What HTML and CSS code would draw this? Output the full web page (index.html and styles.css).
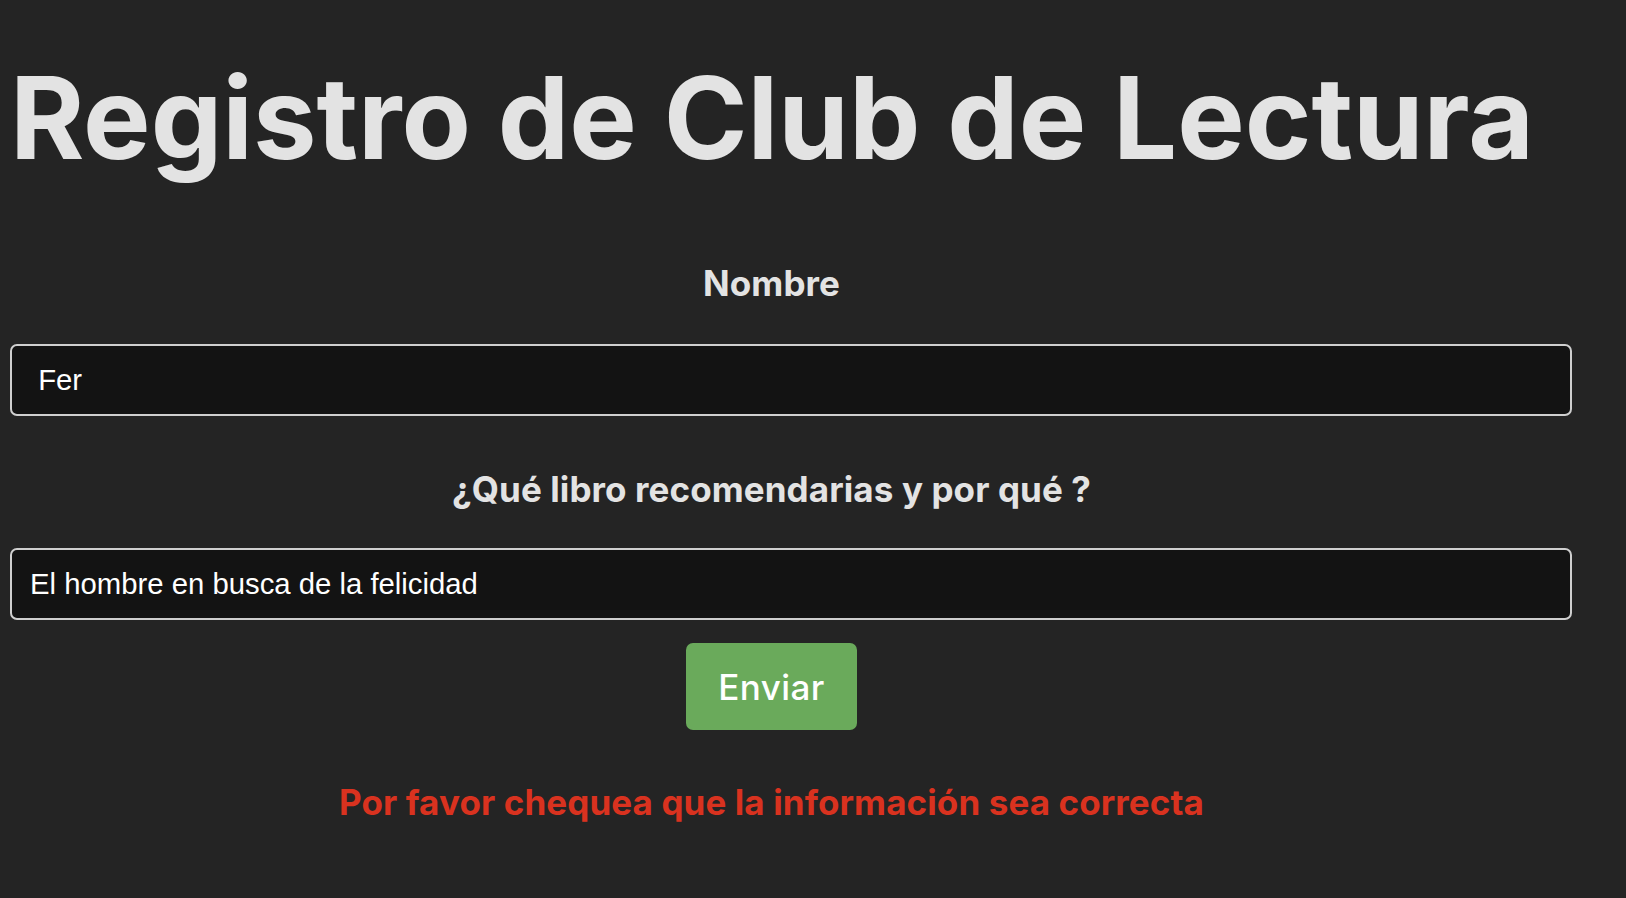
FILE: index.html
```html
<!DOCTYPE html>
<html lang="es">
<head>
<meta charset="utf-8">
<title>Registro de Club de Lectura</title>
<link rel="stylesheet" href="styles.css">
</head>
<body>
<div class="page">
  <h1 class="title">Registro de Club de Lectura</h1>
  <form class="form">
    <label class="label label-first" for="nombre">Nombre</label>
    <input class="field" id="nombre" type="text" value=" Fer">
    <label class="label label-second" for="libro">¿Qué libro recomendarias y por qué ?</label>
    <input class="field" id="libro" type="text" value="El hombre en busca de la felicidad">
    <button class="submit" type="button">Enviar</button>
    <p class="error">Por favor chequea que la información sea correcta</p>
  </form>
</div>
</body>
</html>
```

FILE: styles.css
```css
html, body {
  margin: 0;
  padding: 0;
  background: #242424;
}

body {
  font-family: Inter, "Noto Sans", sans-serif;
  color: #e3e3e3;
  min-height: 898px;
}

.page {
  width: 1527px;
  margin-left: 8px;
  display: flex;
  flex-direction: column;
}

.title {
  margin: 50px 0 0 0;
  padding-left: 2px;
  font-size: 113.4px;
  line-height: 1.2;
  font-weight: 700;
  white-space: nowrap;
  color: #e3e3e3;
}

.form {
  display: flex;
  flex-direction: column;
  align-items: center;
}

.label {
  font-size: 35px;
  line-height: 1.2;
  font-weight: 700;
  letter-spacing: 0.1px;
  color: #e3e3e3;
}

.label-first {
  margin-top: 76px;
  margin-bottom: 40px;
}

.label-second {
  margin-top: 52px;
  margin-bottom: 38px;
}

.field {
  align-self: flex-start;
  box-sizing: border-box;
  width: 1562px;
  height: 72px;
  margin-left: 2px;
  padding: 0 18px;
  background: #131313;
  border: 2px solid #cfcfcf;
  border-radius: 7px;
  color: #ffffff;
  font-family: "Liberation Sans", Arial, sans-serif;
  font-size: 29.3px;
  outline: none;
}

.submit {
  margin-top: 23px;
  padding: 22.5px 32px;
  background: #6aaa5b;
  color: #ffffff;
  border: none;
  border-radius: 7px;
  font-family: Inter, "Noto Sans", sans-serif;
  font-size: 35px;
  line-height: 1.2;
  font-weight: 500;
  letter-spacing: 0.4px;
  cursor: pointer;
}

.error {
  margin: 51px 0 0 0;
  font-size: 35px;
  line-height: 1.2;
  font-weight: 700;
  letter-spacing: 0.1px;
  color: #d9321f;
}
```
